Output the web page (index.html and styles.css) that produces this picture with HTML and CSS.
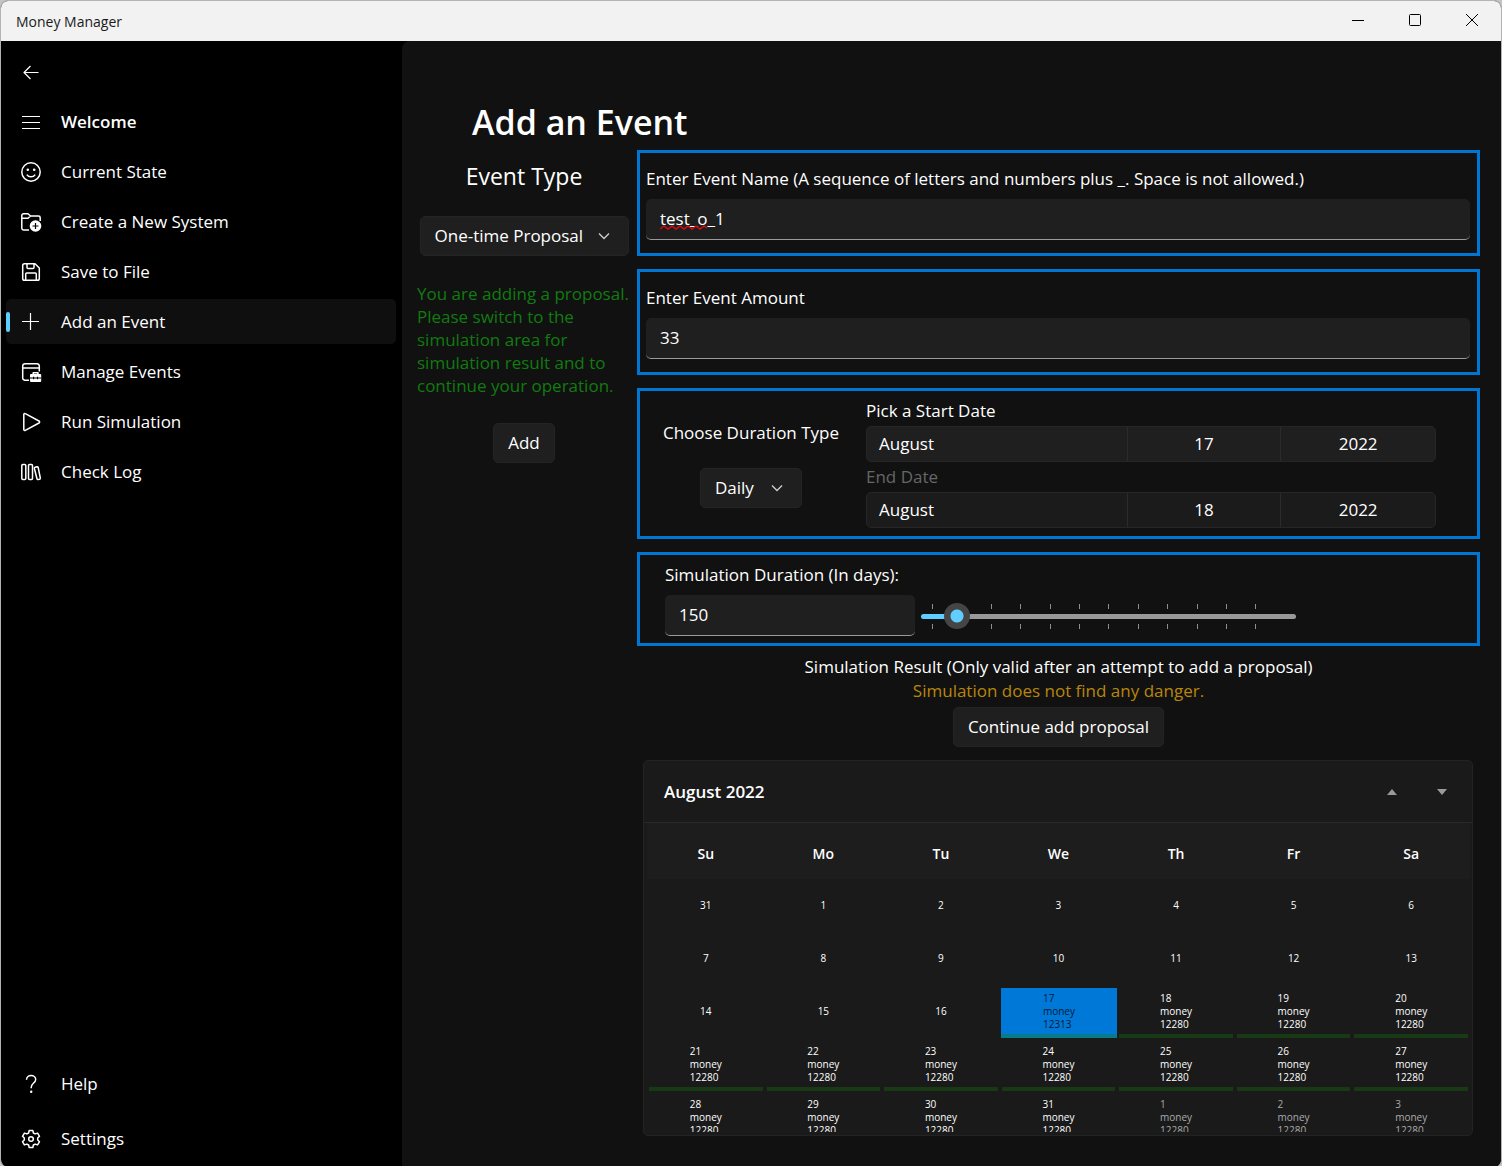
FILE: index.html
```html
<!DOCTYPE html>
<html lang="en">
<head>
<meta charset="utf-8">
<meta name="viewport" content="width=device-width, initial-scale=1">
<title>Money Manager</title>
<link rel="stylesheet" href="styles.css">
</head>
<body>
<div class="window">
  <header class="titlebar">
    <span class="titlebar-name">Money Manager</span>
    <div class="titlebar-buttons">
      <button class="window-button" aria-label="Minimize"><svg width="14" height="14" viewBox="0 0 14 14"><path d="M1 7.500h12"/></svg></button>
      <button class="window-button" aria-label="Maximize"><svg width="14" height="14" viewBox="0 0 14 14"><rect x="1.500" y="1.500" width="11" height="11" rx="1"/></svg></button>
      <button class="window-button" aria-label="Close"><svg width="14" height="14" viewBox="0 0 14 14"><path d="M1 1l12 12M13 1L1 13"/></svg></button>
    </div>
  </header>

  <div class="shell">
    <nav class="sidebar" aria-label="Main">
      <button class="nav-item" aria-label="Back"><svg class="icon" viewBox="0 0 20 20"><path class="thin" d="M17.500 10.500H3M9.500 4L3 10.500L9.500 17"/></svg></button>
      <button class="nav-item nav-title"><svg class="icon" viewBox="0 0 20 20"><path class="thin" d="M1 4.500h18M1 10.500h18M1 16.500h18"/></svg>Welcome</button>
      <a class="nav-item" href="#state"><svg class="icon" viewBox="0 0 20 20"><circle cx="10" cy="10" r="9.200"/><path d="M5.800 12.600c2 3 6.400 3 8.400 0"/><circle class="solid" cx="6.800" cy="7.800" r="1.300"/><circle class="solid" cx="13.200" cy="7.800" r="1.300"/></svg>Current State</a>
      <a class="nav-item" href="#create"><svg class="icon" viewBox="0 0 20 20"><path d="M8 18H2.500A1.700 1.700 0 0 1 .8 16.300V3.500A1.700 1.700 0 0 1 2.500 1.800H7L9.500 4H17.500A1.700 1.700 0 0 1 19.200 5.700V9M1 6.200H7L9.500 4"/><circle class="solid" cx="14.500" cy="14" r="5.800"/><path class="cut" d="M14.500 11v6M11.500 14h6"/></svg>Create a New System</a>
      <a class="nav-item" href="#save"><svg class="icon" viewBox="0 0 20 20"><path d="M3.500 1.700H14L18.300 6V16.500A1.800 1.800 0 0 1 16.500 18.300H3.500A1.800 1.800 0 0 1 1.700 16.500V3.500A1.800 1.800 0 0 1 3.500 1.700ZM6 2V5.500A1 1 0 0 0 7 6.500H12A1 1 0 0 0 13 5.500V2M4.700 18V12A1 1 0 0 1 5.700 11H14.300A1 1 0 0 1 15.300 12V18"/></svg>Save to File</a>
      <a class="nav-item active" href="#add" aria-current="page"><svg class="icon" viewBox="0 0 20 20"><path class="thin" d="M1 9.500h17M9.500 1v17"/></svg>Add an Event</a>
      <a class="nav-item" href="#manage"><svg class="icon" viewBox="0 0 20 20"><path d="M8 18.200H4A2.300 2.300 0 0 1 1.700 15.900V4A2.300 2.300 0 0 1 4 1.700H16A2.300 2.300 0 0 1 18.300 4V9.500M2 6H18"/><path d="M12.200 12V10.800H17V12"/><path class="solid" d="M10 12h9.200a1 1 0 0 1 1 1V19a1 1 0 0 1-1 1H10a1 1 0 0 1-1-1V13a1 1 0 0 1 1-1Z"/><path class="cut" d="M9 16h11.200M12.600 14.800v2.500M16.500 14.800v2.500"/></svg>Manage Events</a>
      <a class="nav-item" href="#run"><svg class="icon" viewBox="0 0 20 20"><path d="M2.800 2.500V17.500C2.800 18.300 3.600 18.700 4.300 18.300L18 11C18.800 10.500 18.800 9.500 18 9L4.300 1.700C3.600 1.300 2.800 1.700 2.800 2.500Z"/></svg>Run Simulation</a>
      <a class="nav-item" href="#log"><svg class="icon" viewBox="0 0 20 20"><rect x=".8" y="2.500" width="4" height="15" rx="1"/><rect x="7.500" y="2.500" width="4" height="15" rx="1"/><path d="M14 5.200L16 4.700Q17 4.600 17.200 5.500L19.300 16Q19.400 16.900 18.600 17.200L17 17.500Q16.200 17.600 16 16.800L13.300 6.300Q13.200 5.400 14 5.200Z"/></svg>Check Log</a>
      <div class="nav-footer">
        <a class="nav-item" href="#help"><svg class="icon" viewBox="0 0 20 20"><path d="M5.500 5.800C5.500 -.2 14.700 .2 14.700 5.500C14.700 9 10.200 9.200 10.200 13.500V14.200"/><circle class="solid" cx="10.200" cy="17.700" r="1.200"/></svg>Help</a>
        <a class="nav-item" href="#settings"><svg class="icon" viewBox="0 0 20 20"><circle cx="10" cy="10" r="2.300"/><path d="M8.200 1.500H11.800L12.400 4L14.100 4.900L16.600 4.100L18.500 7.300L16.700 9V11L18.500 12.700L16.600 15.900L14.100 15.100L12.400 16L11.800 18.500H8.200L7.600 16L5.900 15.100L3.400 15.900L1.500 12.700L3.300 11V9L1.500 7.300L3.400 4.100L5.900 4.900L7.600 4Z"/></svg>Settings</a>
      </div>
    </nav>

    <main class="page">
      <h1 class="page-title">Add an Event</h1>
      <form class="event-form">
        <section class="type-column">
          <label class="type-label" for="event-type">Event Type</label>
          <div class="select-box type-select">
            <select id="event-type"><option>One-time Proposal</option></select>
            <svg class="chevron" width="12" height="8" viewBox="0 0 12 8"><path d="M1 1.500l5 5 5-5"/></svg>
          </div>
          <p class="notice">You are adding a proposal. Please switch to the simulation area for simulation result and to continue your operation.</p>
          <button class="button" type="button">Add</button>
        </section>

        <div class="detail-column">
          <section class="panel text-panel">
            <label for="event-name">Enter Event Name (A sequence of letters and numbers plus _. Space is not allowed.)</label>
            <div class="name-box">
              <input class="text-box" id="event-name" type="text" value="test_o_1" spellcheck="false">
              <svg class="squiggle" width="50" height="5" viewBox="0 0 50 5"><path d="M0 4l4-3 4 3 4-3 4 3 4-3 4 3 4-3 4 3 4-3 4 3 4-3 3 2"/></svg>
            </div>
          </section>

          <section class="panel text-panel">
            <label for="event-amount">Enter Event Amount</label>
            <input class="text-box" id="event-amount" type="text" value="33">
          </section>

          <section class="panel date-panel">
            <div class="duration-type">
              <label for="duration-type">Choose Duration Type</label>
              <div class="select-box">
                <select id="duration-type"><option>Daily</option></select>
                <svg class="chevron" width="12" height="8" viewBox="0 0 12 8"><path d="M1 1.500l5 5 5-5"/></svg>
              </div>
            </div>
            <div class="dates">
              <label for="start-date">Pick a Start Date</label>
              <button class="date-picker" id="start-date" type="button"><span class="month">August</span><span>17</span><span>2022</span></button>
              <label class="muted" for="end-date">End Date</label>
              <button class="date-picker inactive" id="end-date" type="button"><span class="month">August</span><span>18</span><span>2022</span></button>
            </div>
          </section>

          <section class="panel simulation-panel">
            <label for="simulation-days">Simulation Duration (In days):</label>
            <div class="simulation-row">
              <input class="text-box days-box" id="simulation-days" type="text" value="150">
              <div class="slider">
                <svg class="ticks" width="375" height="26" viewBox="0 0 375 26"><path d="M11.500 0v5M70.500 0v5M99.500 0v5M129.500 0v5M158.500 0v5M187.500 0v5M217.500 0v5M246.500 0v5M276.500 0v5M305.500 0v5M334.500 0v5M11.500 20v5M70.500 20v5M99.500 20v5M129.500 20v5M158.500 20v5M187.500 20v5M217.500 20v5M246.500 20v5M276.500 20v5M305.500 20v5M334.500 20v5"/></svg>
                <input class="range" type="range" min="30" max="1890" value="150" aria-label="Simulation duration in days">
              </div>
            </div>
          </section>

          <section class="result">
            <p>Simulation Result (Only valid after an attempt to add a proposal)</p>
            <p class="verdict">Simulation does not find any danger.</p>
            <button class="button" type="button">Continue add proposal</button>
          </section>

          <section class="calendar">
            <header class="calendar-header">
              <h2>August 2022</h2>
              <button class="month-button" type="button" aria-label="Previous month"><svg width="12" height="6" viewBox="0 0 12 6"><path d="M1 6L6 0l5 6z"/></svg></button>
              <button class="month-button" type="button" aria-label="Next month"><svg width="12" height="6" viewBox="0 0 12 6"><path d="M1 0l5 6 5-6z"/></svg></button>
            </header>
            <div class="calendar-view">
              <table class="days">
                <thead><tr><th>Su</th><th>Mo</th><th>Tu</th><th>We</th><th>Th</th><th>Fr</th><th>Sa</th></tr></thead>
                <tbody>
                  <tr><td>31</td><td>1</td><td>2</td><td>3</td><td>4</td><td>5</td><td>6</td></tr>
                  <tr><td>7</td><td>8</td><td>9</td><td>10</td><td>11</td><td>12</td><td>13</td></tr>
                  <tr><td>14</td><td>15</td><td>16</td>
                    <td class="ok today"><div><span>17<br>money<br>12313</span></div></td>
                    <td class="ok"><div><span>18<br>money<br>12280</span></div></td>
                    <td class="ok"><div><span>19<br>money<br>12280</span></div></td>
                    <td class="ok"><div><span>20<br>money<br>12280</span></div></td></tr>
                  <tr>
                    <td class="ok"><div><span>21<br>money<br>12280</span></div></td>
                    <td class="ok"><div><span>22<br>money<br>12280</span></div></td>
                    <td class="ok"><div><span>23<br>money<br>12280</span></div></td>
                    <td class="ok"><div><span>24<br>money<br>12280</span></div></td>
                    <td class="ok"><div><span>25<br>money<br>12280</span></div></td>
                    <td class="ok"><div><span>26<br>money<br>12280</span></div></td>
                    <td class="ok"><div><span>27<br>money<br>12280</span></div></td></tr>
                  <tr>
                    <td class="ok"><div><span>28<br>money<br>12280</span></div></td>
                    <td class="ok"><div><span>29<br>money<br>12280</span></div></td>
                    <td class="ok"><div><span>30<br>money<br>12280</span></div></td>
                    <td class="ok"><div><span>31<br>money<br>12280</span></div></td>
                    <td class="ok next"><div><span>1<br>money<br>12280</span></div></td>
                    <td class="ok next"><div><span>2<br>money<br>12280</span></div></td>
                    <td class="ok next"><div><span>3<br>money<br>12280</span></div></td></tr>
                </tbody>
              </table>
            </div>
          </section>
        </div>
      </form>
    </main>
  </div>
</div>
</body>
</html>
```
FILE: styles.css
```css
* {
  box-sizing: border-box;
}

body {
  margin: 0;
  background: #c4c4c4;
  color: #fff;
  font: 17px/24px "Open Sans", "Noto Sans", sans-serif;
}

h1, h2, p {
  margin: 0;
}

button, input, select {
  margin: 0;
  border: 0;
  color: inherit;
  font: inherit;
}

button {
  padding: 0;
  background: none;
}

svg {
  display: block;
  fill: none;
  stroke: currentColor;
}

.window {
  display: flex;
  flex-direction: column;
  min-height: 100vh;
  border: 1px solid #b4b4b4;
  border-bottom: 0;
  border-radius: 8px;
  overflow: hidden;
  background: #000;
}

.titlebar {
  display: flex;
  align-items: center;
  justify-content: space-between;
  height: 40px;
  padding: 0 1px 0 15px;
  background: #f2f2f2;
  color: #1a1a1a;
}

.titlebar-name {
  padding-top: 2px;
  font-size: 14px;
}

.titlebar-buttons {
  display: flex;
}

.window-button {
  display: grid;
  place-items: center;
  width: 57px;
  height: 38px;
  padding-bottom: 2px;
  color: #000;
}

.shell {
  display: flex;
  flex: 1;
}

/* Sidebar */

.sidebar {
  display: flex;
  flex-direction: column;
  gap: 5px;
  flex: 0 0 401px;
  padding: 8px 6px 6px 5px;
}

.nav-item {
  position: relative;
  display: flex;
  align-items: center;
  gap: 20px;
  height: 45px;
  padding-left: 15px;
  border-radius: 5px;
  color: #fff;
  text-decoration: none;
}

.nav-title {
  font-weight: 600;
}

.nav-item.active {
  background: #0f0f0f;
}

.nav-item.active::before {
  content: "";
  position: absolute;
  left: 0;
  top: 13px;
  width: 4px;
  height: 20px;
  border-radius: 2px;
  background: #60cdff;
}

.nav-footer {
  display: flex;
  flex-direction: column;
  gap: 10px;
  margin-top: auto;
}

.icon {
  flex: none;
  width: 20px;
  height: 20px;
  stroke-width: 1.5;
  stroke-linejoin: round;
  overflow: visible;
}

.icon .thin {
  stroke-width: 1.2;
}

.icon .solid {
  fill: currentColor;
  stroke: none;
}

.icon .cut {
  stroke: #000;
  stroke-width: 1.2;
}

/* Page */

.page {
  flex: 1;
  min-width: 0;
  padding: 57px 21px 31px 9px;
  border-top-left-radius: 8px;
  background: #111;
}

.page-title {
  margin-left: 61px;
  font-size: 34px;
  line-height: 48px;
  font-weight: 600;
}

.event-form {
  display: flex;
  gap: 6px;
  margin-top: 4px;
}

.type-column {
  display: flex;
  flex-direction: column;
  align-items: center;
  flex: 0 0 220px;
  padding: 11px 0 0 6px;
}

.type-label {
  font-size: 23px;
  line-height: 30px;
}

.type-select {
  width: 209px;
  margin-top: 25px;
}

.notice {
  width: 100%;
  margin: 26px 0;
  color: #107c10;
  line-height: 23px;
}

.select-box {
  position: relative;
}

.select-box select {
  display: block;
  width: 100%;
  height: 40px;
  padding: 0 40px 0 14px;
  border: 1px solid #242424;
  border-radius: 5px;
  appearance: none;
  background: #1f1f1f;
}

.chevron {
  position: absolute;
  right: 19px;
  top: 16px;
  color: #ccc;
  stroke-width: 1.4;
  pointer-events: none;
}

.button {
  height: 40px;
  padding: 0 14px;
  border: 1px solid #242424;
  border-radius: 5px;
  background: #1f1f1f;
}

.detail-column {
  flex: 1;
  min-width: 0;
}

.panel {
  margin-bottom: 13px;
  border: 3px solid #0076d4;
}

.panel label {
  display: block;
}

.text-panel {
  padding: 14px 7px 13px 6px;
}

.text-panel label {
  margin-bottom: 8px;
}

.text-box {
  display: block;
  width: 100%;
  height: 41px;
  padding: 0 14px 2px;
  border-bottom: 1px solid #9a9a9a;
  border-radius: 5px;
  background: #1f1f1f;
  outline: none;
}

.name-box {
  position: relative;
}

.squiggle {
  position: absolute;
  left: 14px;
  top: 26px;
  stroke: #e00b0b;
  stroke-width: 1.4;
}

.date-panel {
  display: flex;
  gap: 29px;
  padding: 8px 41px 8px 25px;
}

.duration-type {
  display: flex;
  flex-direction: column;
  align-items: center;
  gap: 23px;
  width: 172px;
  padding-top: 22px;
  white-space: nowrap;
}

.duration-type .select-box {
  width: 102px;
}

.dates {
  display: flex;
  flex-direction: column;
  gap: 3px;
  flex: 0 1 570px;
  margin-left: auto;
}

.date-picker {
  display: grid;
  grid-template-columns: 260fr 154fr 155fr;
  height: 36px;
  border: 1px solid #262626;
  border-radius: 5px;
  background: #1f1f1f;
  line-height: 34px;
}

.date-picker span + span {
  border-left: 1px solid #2b2b2b;
}

.date-picker .month {
  padding-left: 12px;
  text-align: left;
}

.date-picker.inactive {
  background: #1b1b1b;
}

.muted {
  color: #666;
}

.simulation-panel {
  padding: 8px 25px 7px;
}

.simulation-row {
  display: flex;
  align-items: center;
  gap: 6px;
  margin-top: 8px;
}

.days-box {
  width: 250px;
}

.slider {
  display: grid;
  align-items: center;
  flex: 0 0 375px;
  padding-top: 2px;
}

.ticks,
.range {
  grid-area: 1 / 1;
}

.ticks {
  stroke: #8f8f8f;
}

.range {
  width: 100%;
  height: 26px;
  appearance: none;
  background: none;
}

.range::-webkit-slider-runnable-track {
  height: 5px;
  border-radius: 3px;
  background: linear-gradient(90deg, #60cdff 36px, #999 36px);
}

.range::-webkit-slider-thumb {
  appearance: none;
  width: 26px;
  height: 26px;
  margin-top: -11px;
  border-radius: 50%;
  background: radial-gradient(circle, #60cdff 6px, #454545 7px);
}

.result {
  display: flex;
  flex-direction: column;
  align-items: center;
  margin-top: -4px;
}

.verdict {
  color: #b8860b;
}

.result .button {
  margin-top: 4px;
}

/* Calendar */

.calendar {
  margin: 13px 7px 0 6px;
  border: 1px solid #232323;
  border-radius: 5px;
  background: #1a1a1a;
}

.calendar-header {
  display: flex;
  align-items: center;
  height: 62px;
  padding: 0 5px 0 20px;
  border-bottom: 1px solid #2a2a2a;
}

.calendar-header h2 {
  flex: 1;
  font-size: 17px;
  line-height: 24px;
  font-weight: 600;
}

.month-button {
  display: grid;
  place-items: center;
  width: 50px;
  height: 40px;
  color: #9a9a9a;
}

.month-button path {
  fill: currentColor;
  stroke: none;
}

.calendar-view {
  height: 309px;
  margin: 0 2px 3px 3px;
  overflow: hidden;
}

.days {
  width: 100%;
  border-spacing: 0;
  table-layout: fixed;
  font-size: 10px;
  line-height: 13px;
}

.days th {
  height: 56px;
  padding: 4px 0 0;
  background: #1d1d1d;
  font-size: 14px;
  font-weight: 600;
}

.days td {
  height: 53px;
  padding: 0;
  text-align: center;
}

.days td.ok {
  padding: 3px 2px 0;
}

.days td div {
  height: 50px;
  padding-top: 4px;
  border-bottom: 4px solid #173a14;
}

.days span {
  display: inline-block;
  text-align: left;
}

.days .today {
  color: #001a33;
}

.days td.today {
  padding: 3px 0 0 1px;
}

.days .today div {
  border-color: #087b8a;
  background: #0078d7;
}

.days .next {
  color: #aaa;
}
```
